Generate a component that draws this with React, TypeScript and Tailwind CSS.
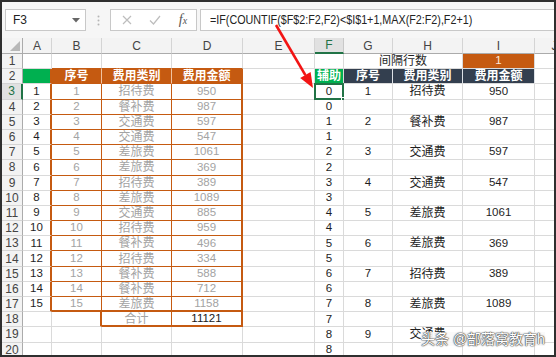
import React from "react";

const GR = "border-r border-r-[#dadada]";
const GB = "border-b border-b-[#dadada]";
const OR1 = "border-r border-r-[#c55a11]";
const OR2 = "border-r-2 border-r-[#c55a11]";
const OB1 = "border-b border-b-[#c55a11]";
const OB2 = "border-b-2 border-b-[#c55a11]";
const HSEP = "border-r border-r-[#f1c3a1]";
const NSEP = "border-r border-r-[#dde1e6]";

const cats = ["招待费", "餐补费", "交通费", "交通费", "差旅费", "差旅费", "招待费", "差旅费", "交通费", "招待费", "餐补费", "招待费", "餐补费", "餐补费", "差旅费"];
const amts = [950, 987, 597, 547, 1061, 369, 389, 1089, 885, 959, 496, 334, 588, 712, 1158];

type Spec = {
  t?: string;
  bg?: string;
  color?: string;
  r?: string;
  b?: string;
  bold?: boolean;
  span?: string;
  sel?: boolean;
};

const isCJK = (s: string) => /[\u4e00-\u9fff]/.test(s);

function Cell({ s }: { s: Spec }) {
  const t = s.t ?? "";
  const size = isCJK(t) ? "text-[12px]" : "text-[11.5px]";
  return (
    <div
      className={[
        "relative flex items-center justify-center whitespace-nowrap leading-none",
        s.bg ?? "bg-white",
        s.color ?? "text-[#1e1e1e]",
        s.r ?? GR,
        s.b ?? GB,
        size,
        s.bold ? "font-bold" : "",
        s.span ?? "",
      ].join(" ")}
    >
      {t}
      {s.sel && (
        <>
          <div className="absolute -left-[1px] -top-[1px] -right-[1px] -bottom-[1px] border-2 border-[#217346]" />
          <div className="absolute -right-[3px] -bottom-[3px] w-[5px] h-[5px] bg-[#217346] border border-white" />
        </>
      )}
    </div>
  );
}

function buildRow(r: number): Spec[] {
  const cells: Spec[] = [];
  // A
  if (r === 2) cells.push({ bg: "bg-[#00b050]", r: OR2 });
  else if (r >= 3 && r <= 17) cells.push({ t: String(r - 2), r: OR2 });
  else cells.push({});
  // B, C, D
  if (r === 1) {
    cells.push({ b: OB1 }, { b: OB1 }, { b: OB1 });
  } else if (r === 2) {
    cells.push(
      { t: "序号", bg: "bg-[#c55a11]", color: "text-white", bold: true, r: HSEP, b: OB1 },
      { t: "费用类别", bg: "bg-[#c55a11]", color: "text-white", bold: true, r: HSEP, b: OB1 },
      { t: "费用金额", bg: "bg-[#c55a11]", color: "text-white", bold: true, r: OR2, b: OB1 }
    );
  } else if (r >= 3 && r <= 17) {
    const i = r - 3;
    const b = r === 17 ? OB2 : OB1;
    const g = "text-[#a3a3a3]";
    cells.push(
      { t: String(i + 1), color: g, r: OR1, b },
      { t: cats[i], color: g, r: OR1, b },
      { t: String(amts[i]), color: g, r: OR2, b }
    );
  } else if (r === 18) {
    cells.push(
      { r: OR2 },
      { t: "合计", color: "text-[#a3a3a3]", r: OR1, b: OB2 },
      { t: "11121", color: "text-[#1a1a1a]", r: OR2, b: OB2 }
    );
  } else {
    cells.push({}, {}, {});
  }
  // E
  cells.push({});
  // F
  if (r === 2) cells.push({ t: "辅助", bg: "bg-[#00b050]", color: "text-white", bold: true });
  else if (r >= 3) cells.push({ t: String(Math.floor((r - 3) / 2)), sel: r === 3 });
  else cells.push({});
  // G H I
  if (r === 1) {
    cells.push({ t: "间隔行数", span: "col-span-2" });
    cells.push({ t: "1", bg: "bg-[#c55a11]", color: "text-[#fde9d9]" });
  } else if (r === 2) {
    cells.push(
      { t: "序号", bg: "bg-[#333f4f]", color: "text-white", bold: true, r: NSEP },
      { t: "费用类别", bg: "bg-[#333f4f]", color: "text-white", bold: true, r: NSEP },
      { t: "费用金额", bg: "bg-[#333f4f]", color: "text-white", bold: true, r: NSEP }
    );
  } else if (r % 2 === 1 && r <= 19) {
    const k = (r - 1) / 2;
    cells.push(
      { t: String(k) },
      { t: cats[k - 1] },
      { t: r === 19 ? "" : String(amts[k - 1]) }
    );
  } else {
    cells.push({}, {}, {});
  }
  // J
  cells.push({});
  return cells;
}

const letters = ["A", "B", "C", "D", "E", "F", "G", "H", "I", "J"];

export default function App() {
  const rows = Array.from({ length: 20 }, (_, i) => i + 1);
  return (
    <div className="relative w-[556px] h-[357px] border-2 border-[#2f2f2f] bg-[#f6f6f6] overflow-hidden flex flex-col font-['Liberation_Sans','Noto_Sans_CJK_SC',sans-serif]">
      {/* Formula bar */}
      <div className="h-[36px] shrink-0 flex items-start pt-[7px] pl-[3px]">
        <div className="w-[81px] h-[22px] bg-white border border-[#c8c8c8] flex items-center justify-between pl-[7px] pr-[5px]">
          <span className="text-[12px] text-[#222] leading-none">F3</span>
          <svg width="8" height="5" viewBox="0 0 8 5">
            <polygon points="0,0 8,0 4,4.5" fill="#666" />
          </svg>
        </div>
        <div className="w-[24px] h-[22px] flex items-center justify-center">
          <svg width="3" height="11" viewBox="0 0 3 11">
            <circle cx="1.5" cy="1.5" r="1" fill="#b5b5b5" />
            <circle cx="1.5" cy="5.5" r="1" fill="#b5b5b5" />
            <circle cx="1.5" cy="9.5" r="1" fill="#b5b5b5" />
          </svg>
        </div>
        <div className="w-[87px] h-[22px] bg-white border border-[#c8c8c8] flex items-center pl-[9px] gap-[14px]">
          <div className="w-[14px] flex justify-center">
            <svg width="10" height="10" viewBox="0 0 10 10">
              <path d="M1 1 L9 9 M9 1 L1 9" stroke="#bdbdbd" strokeWidth="1.2" fill="none" />
            </svg>
          </div>
          <div className="w-[14px] flex justify-center">
            <svg width="12" height="10" viewBox="0 0 12 10">
              <path d="M1 5.5 L4.5 9 L11 1" stroke="#bdbdbd" strokeWidth="1.2" fill="none" />
            </svg>
          </div>
          <div className="w-[14px] flex justify-center items-baseline font-['Liberation_Serif',serif] italic text-[#555] leading-none">
            <span className="text-[14px]">f</span>
            <span className="text-[10px]">x</span>
          </div>
        </div>
        <div className="flex-1 ml-[3px] h-[22px] bg-white border border-[#c8c8c8] border-r-0 flex items-center pl-[9px] overflow-hidden">
          <span className="text-[12.5px] text-[#222] leading-none whitespace-nowrap origin-left scale-x-[0.86] inline-block">
            =IF(COUNTIF($F$2:F2,F2)&lt;$I$1+1,MAX(F2:F2),F2+1)
          </span>
        </div>
      </div>

      {/* Grid */}
      <div className="grid grid-cols-[21px_29px_50px_70px_71px_72px_29px_49px_70px_72px_40px] grid-rows-[16px_repeat(20,15.2px)] bg-white">
        {/* corner */}
        <div className="relative bg-[#f3f3f3] border-r border-r-[#ababab] border-b border-b-[#ababab]">
          <svg className="absolute right-[2px] bottom-[2px]" width="10" height="10" viewBox="0 0 10 10">
            <polygon points="10,0 10,10 0,10" fill="#b8b8b8" />
          </svg>
        </div>
        {letters.map((l) =>
          l === "F" ? (
            <div
              key={l}
              className="flex items-center justify-center bg-[#e1e1e1] text-[#217346] text-[12px] leading-none border-r border-r-[#c8c8c8] border-b-2 border-b-[#217346]"
            >
              {l}
            </div>
          ) : (
            <div
              key={l}
              className="flex items-center justify-center bg-[#f3f3f3] text-[#444] text-[12px] leading-none border-r border-r-[#d4d4d4] border-b border-b-[#ababab]"
            >
              {l}
            </div>
          )
        )}
        {rows.map((r) => (
          <React.Fragment key={r}>
            {r === 3 ? (
              <div className="flex items-center justify-center bg-[#e1e1e1] text-[#217346] text-[12px] leading-none border-r-2 border-r-[#217346] border-b border-b-[#d4d4d4]">
                {r}
              </div>
            ) : (
              <div className="flex items-center justify-center bg-[#f3f3f3] text-[#444] text-[12px] leading-none border-r border-r-[#ababab] border-b border-b-[#d4d4d4]">
                {r}
              </div>
            )}
            {buildRow(r).map((s, ci) => (
              <Cell key={ci} s={s} />
            ))}
          </React.Fragment>
        ))}
      </div>

      {/* red arrow annotation */}
      <svg className="absolute left-[-2px] top-[-2px] pointer-events-none" width="556" height="357" viewBox="0 0 556 357">
        <line x1="276" y1="25" x2="305.4" y2="75.1" stroke="#f21414" strokeWidth="2.6" />
        <polygon points="313,88 300.2,78.1 310.6,72.1" fill="#f21414" />
      </svg>

      {/* watermark */}
      <div className="absolute left-[419px] top-[330px] text-[14px] leading-none whitespace-nowrap text-white bg-[#fafafa]/90 [text-shadow:0_0_1px_#333,0_0_1px_#333,0_0_2px_#555]">
        头条 @部落窝教育h
      </div>
    </div>
  );
}
